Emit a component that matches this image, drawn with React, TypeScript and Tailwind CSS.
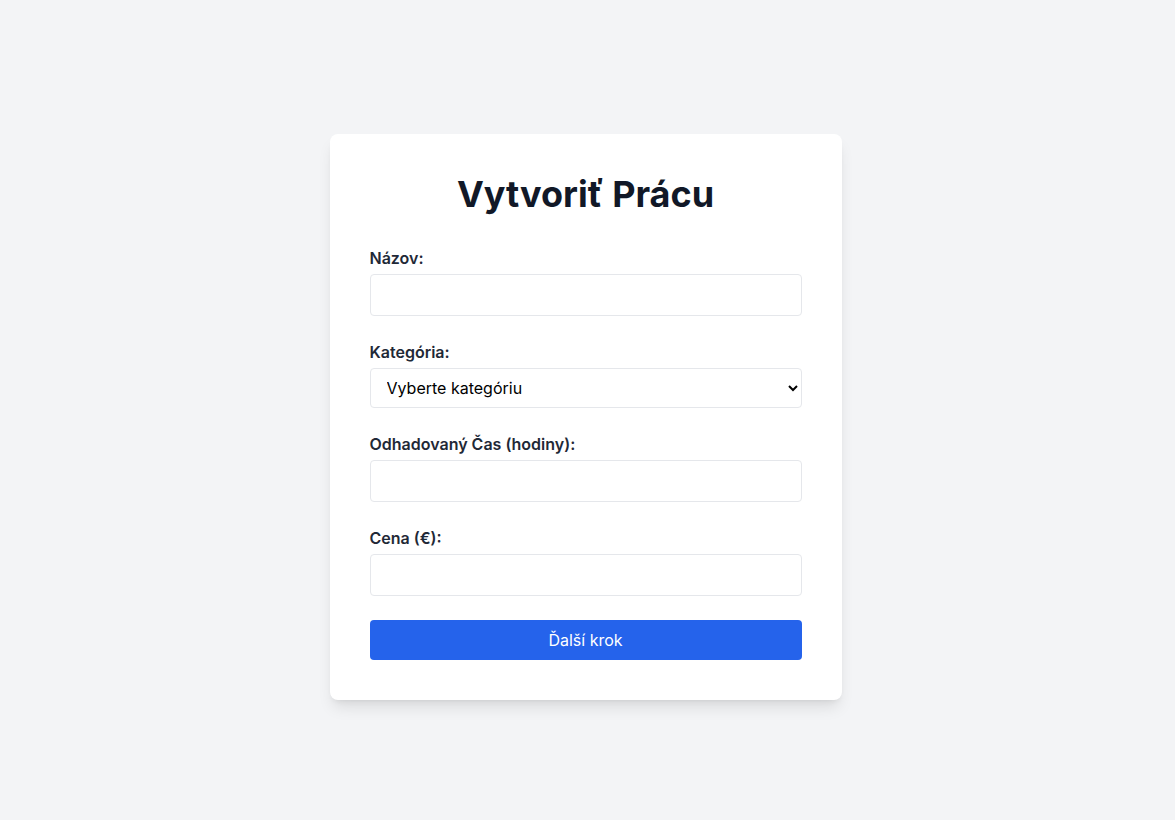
import React from "react";

export default function App() {
  return (
    <div
      className="min-h-screen bg-[#f3f4f6] flex justify-center pt-[134px] pr-[4px]"
      style={{ fontFamily: "Inter, 'Noto Sans', sans-serif" }}
    >
      <div className="w-[512px] h-fit bg-white rounded-lg shadow-lg p-10">
        <h1 className="text-4xl font-bold text-[#111827] text-center mb-8">Vytvoriť Prácu</h1>
        <form className="flex flex-col gap-6" onSubmit={(e) => e.preventDefault()}>
          <div>
            <label className="block text-base font-semibold text-[#1f2937] mb-1">Názov:</label>
            <input type="text" className="w-full border border-[#e5e7eb] rounded px-3 py-2 text-base" />
          </div>
          <div>
            <label className="block text-base font-semibold text-[#1f2937] mb-1">Kategória:</label>
            <select className="w-full h-10 border border-[#e5e7eb] rounded px-3 text-base text-black bg-white">
              <option>Vyberte kategóriu</option>
            </select>
          </div>
          <div>
            <label className="block text-base font-semibold text-[#1f2937] mb-1">Odhadovaný Čas (hodiny):</label>
            <input type="number" className="w-full border border-[#e5e7eb] rounded px-3 py-2 text-base" />
          </div>
          <div>
            <label className="block text-base font-semibold text-[#1f2937] mb-1">Cena (€):</label>
            <input type="number" className="w-full border border-[#e5e7eb] rounded px-3 py-2 text-base" />
          </div>
          <button type="submit" className="w-full h-10 bg-[#2563eb] text-white text-base rounded">
            Ďalší krok
          </button>
        </form>
      </div>
    </div>
  );
}
